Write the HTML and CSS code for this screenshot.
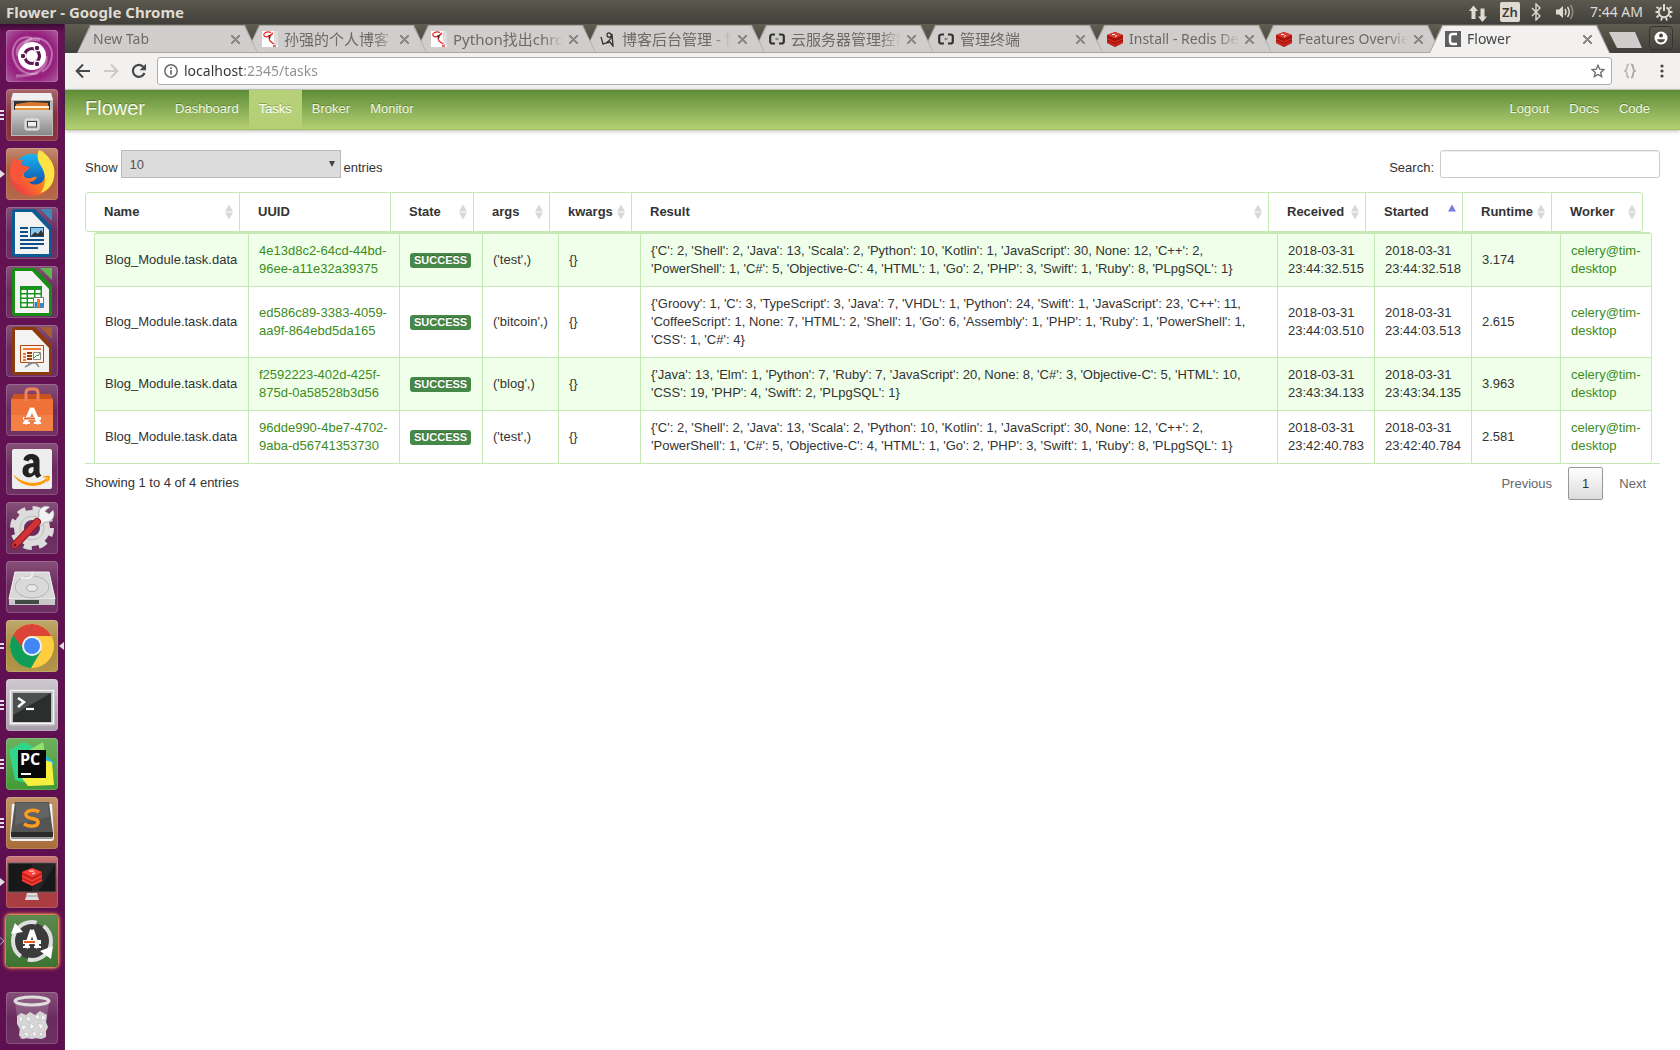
FILE: index.html
```html
<!DOCTYPE html>
<html lang="en">
<head>
<meta charset="utf-8">
<title>Flower</title>
<link rel="stylesheet" href="styles.css">
</head>
<body>
<header class="panel">
  <h1 class="panel-title">Flower - Google Chrome</h1>
  <div class="indicators">
    <svg width="20" height="20" viewBox="0 0 20 20" fill="#dfdbd2"><path d="M5.500 3.500L10 9H7.500v8h-4V9H1zM14.500 20L10 14.500h2.500v-8h4v8H19z"/></svg>
    <span class="ime">Zh</span>
    <svg width="12" height="18" viewBox="0 0 12 18" fill="none" stroke="#dfdbd2" stroke-width="1.400"><path d="M2 5l8 8-4 4V1l4 4-8 8"/></svg>
    <svg width="20" height="18" viewBox="0 0 20 18"><path d="M0 6.500h3L7 3v12l-4-3.500H0z" fill="#dfdbd2"/><g fill="none" stroke="#dfdbd2" stroke-width="1.500"><path d="M9 6q2 3 0 6"/><path d="M11.500 4q3.500 5 0 10"/><path d="M14.500 2q4.500 7 0 14" opacity=".45"/></g></svg>
    <time class="clock">7:44 AM</time>
    <svg width="18" height="18" viewBox="0 0 18 18" fill="none" stroke="#dfdbd2"><path d="M6.500 4.300a5.300 5.300 0 1 0 5 0M9 1v7" stroke-width="2"/><path d="M3.600 5.500L1.500 4M3 9H.5M3.600 12.500l-2 2M7 14.800L6 17.500M11 14.800l1 2.700M14.400 12.500l2 2M15 9h2.500M14.400 5.500l2-1.500" stroke-width="1.800"/></svg>
  </div>
</header>
<div class="desktop">
<nav class="launcher" aria-label="Launcher">
  <button class="tile ubuntu" aria-label="Search"><svg viewBox="0 0 52 52"><g fill="none" stroke="#fff"><path d="M26 8C10 4 2 20 10 34c4 8 14 12 22 9" opacity=".35" stroke-width="2"/><path d="M18 14C28 2 46 10 46 24c0 8-3 14-10 18" opacity=".35" stroke-width="2"/><path d="M40 26c2 14-12 20-30 20M12 26C8 14 22 8 34 10" opacity=".3" stroke-width="3"/></g><circle cx="26" cy="26" r="14" fill="#fff"/><circle cx="26" cy="26" r="7.500" fill="none" stroke="#5e1551" stroke-width="3.200"/><g stroke="#fff" stroke-width="1.200" fill="#5e1551"><circle cx="17" cy="26" r="2.800"/><circle cx="31" cy="18" r="2.800"/><circle cx="31" cy="34" r="2.800"/></g></svg></button>
  <button class="tile files" aria-label="Files"><svg viewBox="0 0 52 52"><defs><linearGradient id="cab" x2="0" y2="1"><stop stop-color="#d0d0d0"/><stop offset="1" stop-color="#888"/></linearGradient></defs><path d="M7 4h38l2 7v36H5V11z" fill="#b9b9b9"/><path d="M7 4h38l2 7H5z" fill="#efefef"/><path d="M8 12h36v10H8z" fill="#333"/><path d="M10 15l14-2 18 1v8H10z" fill="#d9792e"/><path d="M9 17h34v2H9z" fill="#fff1dc"/><path d="M9 19h34v3H9z" fill="#e9953e"/><path d="M6 21h40v25H6z" fill="url(#cab)"/><rect x="19" y="30" width="14" height="11" rx="2" fill="#c9c9c9" stroke="#eee"/><rect x="21.500" y="32.500" width="9" height="5.500" fill="#eee" stroke="#444"/></svg></button>
  <button class="tile firefox" aria-label="Firefox"><svg viewBox="0 0 52 52"><defs><linearGradient id="fx" x1="1" y1="0" x2="0" y2="1"><stop stop-color="#ffe14a"/><stop offset=".45" stop-color="#ff8a1d"/><stop offset="1" stop-color="#e8254f"/></linearGradient><linearGradient id="globe" x2="0" y2="1"><stop stop-color="#19b5f1"/><stop offset="1" stop-color="#123a9c"/></linearGradient></defs><circle cx="26" cy="25" r="19" fill="url(#globe)"/><path d="M4 26c0-7 2-10 4-13l8-1c-2 2-2 4-1 6l8 1c0 3-4 4-5 6-1 3 1 5 4 5 3 1 5-2 9-1-2 4-5 5-8 5 4 4 11 3 14-1 4-6 2-14-2-20-2-4-2-8 0-11 6 5 13 12 13 24 0 12-10 22-22 22S4 39 4 26z" fill="url(#fx)"/><path d="M33 2c8 5 15 11 15.500 22 0 12-6 18-14 21 6-8 6-19 0-28-3-5-4-10-1.500-15z" fill="#ffe244"/><path d="M4 24c0-6 2-9 4-14l6 3 4-2c-2 2-3 4-2 6l7 2c0 3-4 4-5 6-5 1-5 8 1 12-9 0-15-6-15-13z" fill="#f9553a"/></svg></button>
  <button class="tile" aria-label="Writer"><svg viewBox="0 0 52 52"><path d="M6 5q0-3 3-3h20l17 18v27q0 3-3 3H9q-3 0-3-3z" fill="#0d5b92"/><path d="M34 2h12v12z" fill="#3f87b5"/><path d="M9 5h17l17 18v24H9z" fill="#f3f3f3"/><path d="M14 20h8v2h-8zM14 24h8v2h-8zM14 28h8v2h-8zM14 32h24v2H14zM14 36h24v2H14zM14 40h18v2H14z" fill="#0d4f86"/><path d="M24 20h14v10H24z" fill="#0d4f86"/><path d="M25 21h12v8H25z" fill="#8bc5e9"/><path d="M25 29l4-4 3 2 3-4 2 3v3z" fill="#333"/></svg></button>
  <button class="tile" aria-label="Calc"><svg viewBox="0 0 52 52"><path d="M6 5q0-3 3-3h20l17 18v27q0 3-3 3H9q-3 0-3-3z" fill="#1b8c13"/><path d="M34 2h12v12z" fill="#5cb84f"/><path d="M9 5h17l17 18v24H9z" fill="#f3f3f3"/><path d="M14 20h22v22H14z" fill="#18931d"/><g fill="#fff"><path d="M15.500 24h5v3h-5zM22 24h6v3h-6zM29.500 24h5v3h-5zM15.500 28.500h5v3h-5zM22 28.500h6v3h-6zM29.500 28.500h5v3h-5zM15.500 33h5v3h-5zM22 33h6v3h-6zM15.500 37.500h5v3h-5zM22 37.500h6v3h-6z"/></g><path d="M27.500 31.500h10v10h-10z" fill="#fff" stroke="#777"/><path d="M28.500 36h2.500v5h-2.500z" fill="#3584c6"/><path d="M31 33h3v8h-3z" fill="#f07d1c"/><path d="M34 37h3v4h-3z" fill="#3584c6"/></svg></button>
  <button class="tile" aria-label="Impress"><svg viewBox="0 0 52 52"><path d="M6 5q0-3 3-3h20l17 18v27q0 3-3 3H9q-3 0-3-3z" fill="#8c3b0c"/><path d="M34 2h12v12z" fill="#a85d35"/><path d="M9 5h17l17 18v24H9z" fill="#f3f3f3"/><path d="M14.500 20.500h23v17h-23z" fill="#fff3ea" stroke="#b8450f"/><path d="M17 23h18v2H17zM17 28h3v2h-3zM17 31h3v2h-3zM17 34h3v2h-3z" fill="#ee7a3d"/><path d="M21 27h5v2h-5zM21 30h5v2h-5zM21 33h5v2h-5z" fill="#96390e"/><path d="M27.500 27.500h7v7h-7z" fill="#fff" stroke="#888"/><path d="M28 33l3-3 1 1 2-3" fill="none" stroke="#3aa53a"/><path d="M22 38h8l3 4M26 38l-7 4" fill="none" stroke="#888" stroke-width="1.500"/></svg></button>
  <button class="tile" aria-label="Ubuntu Software"><svg viewBox="0 0 52 52"><path d="M8 10h36l3 6v31H5V16z" fill="#ef7338"/><path d="M8 10h36l3 5H5z" fill="#c9531f"/><path d="M5 31h42v16H5z" fill="#f58a4e" opacity=".6"/><path d="M20 17V9q0-4 4-4h4q4 0 4 4v8" fill="none" stroke="#f0835a" stroke-width="3"/><path d="M26 24l-7 16M26 24l7 16" fill="none" stroke="#fff" stroke-width="4"/><path d="M17 33h18v3H17zM17 38h7v2h-7zM28 38h7v2h-7z" fill="#fff"/><path d="M18 33.500h11v2H18z" fill="#e8672c"/></svg></button>
  <button class="tile" aria-label="Amazon"><svg viewBox="0 0 52 52"><rect x="6" y="6" width="40" height="40" rx="2" fill="#eee"/><path d="M17.500 17c1-8 16-8 16 1v11q0 2 2 3.500l-4 2.500q-2-1-3-3.500c-4 5-12 3-12-3.500 0-7 6-7.500 11-8 0-5-4-4.500-5-1.500zM27.500 24c-3 0-5 1-5 4 0 4 5 3 5-1z" fill="#222" fill-rule="evenodd"/><path d="M8 32c10 10 25 10 33 3l1 2C33 46 16 45 8 33z" fill="#f90"/><path d="M36 34q5-2 8-1 0 4-3 7l1-5z" fill="#f90"/></svg></button>
  <button class="tile" aria-label="System Settings"><svg viewBox="0 0 52 52"><circle cx="26" cy="26" r="19" fill="none" stroke="#dcdcdc" stroke-width="6" stroke-dasharray="8 6.920"/><circle cx="26" cy="26" r="13" fill="none" stroke="#dcdcdc" stroke-width="10"/><circle cx="26" cy="26" r="12" fill="none" stroke="#bdbdbd"/><path d="M44 5c-6-3-13 2-11 9l-4 5 5 5 5-4c7 1 11-6 8-12l-4 4-4-3z" fill="#f2f2f2" stroke="#999" stroke-width=".8"/><path d="M31 20L9 43" stroke="#891d22" stroke-width="8" stroke-linecap="round"/><path d="M31 20L9 43" stroke="#d03238" stroke-width="6" stroke-linecap="round"/><circle cx="9" cy="43" r="1.500" fill="#701318"/></svg></button>
  <button class="tile" aria-label="Disk"><svg viewBox="0 0 52 52"><path d="M9 11h34l6 27H3z" fill="#d9d9d9" stroke="#f4f4f4"/><path d="M3 38h46v6H3z" fill="#c9c9c9"/><path d="M9 39h24v4H9z" fill="#434b48"/><ellipse cx="26" cy="26" rx="17" ry="11" fill="none" stroke="#b5b5b5"/><ellipse cx="26" cy="27" rx="5.500" ry="3.500" fill="#e8e8e8" stroke="#aaa"/><path d="M15 17q14 1 11-6" fill="none" stroke="#eee" stroke-width="2"/></svg></button>
  <button class="tile chrome" aria-label="Google Chrome"><svg viewBox="0 0 52 52"><circle cx="26" cy="26" r="22" fill="#ffcd40"/><path d="M26 26L7 15A22 22 0 0 0 25 48l10-17z" fill="#0f9d58"/><path d="M6.900 15A22 22 0 0 1 45.500 16H26a10 10 0 0 0-9.500 12z" fill="#db4437"/><circle cx="26" cy="26" r="10" fill="#f1f1f1"/><circle cx="26" cy="26" r="8" fill="#4285f4"/></svg></button>
  <button class="tile terminal" aria-label="Terminal"><svg viewBox="0 0 52 52"><rect x="3" y="10" width="46" height="37" rx="2" fill="#bcbcbc"/><rect x="4.500" y="11.500" width="43" height="33" fill="none" stroke="#f5f5f5" stroke-width="1.500"/><rect x="7" y="14" width="38" height="29" fill="#2c2e2e"/><path d="M7 14h38L7 36z" fill="#4d5050"/><path d="M12 19l6 4-6 5" fill="none" stroke="#fff" stroke-width="2.500"/><path d="M20 30h8" stroke="#fff" stroke-width="2.200"/></svg></button>
  <button class="tile pycharm" aria-label="PyCharm"><svg viewBox="0 0 52 52"><path d="M3 12L18 4l15 8 4-8 2 14-14 28L9 42z" fill="#31d58a"/><path d="M37 4L20 14v24l20-18z" fill="#8fe36b"/><path d="M34 14l14 10-6 10z" fill="#1dbbe6"/><path d="M38 22l8 2 2 23-26 1-6-8z" fill="#f6ef3e"/><rect x="12" y="12" width="28" height="28" fill="#080808"/><path d="M15 35h10v2H15z" fill="#fff"/><text x="14" y="27" class="pc">PC</text></svg></button>
  <button class="tile sublime" aria-label="Sublime Text"><svg viewBox="0 0 52 52"><path d="M6 7L4 41q0 3 3 3h38q3 0 3-3L46 7z" fill="#f3f3f3"/><path d="M6 38l-1 4h42l-1-4z" fill="#999"/><path d="M9 5h34l4 31v3H5v-3z" fill="#545454"/><path d="M5 35h42v5H5z" fill="#2b2b2b"/><path d="M10 6h32l1 14-34 8z" fill="#6e6e6e" opacity=".6"/><path d="M33 15c-4-3-14-2-13 3s13 2 12 8c-1 4-9 4-14 1" fill="none" stroke="#ff9b1f" stroke-width="3.500"/></svg></button>
  <button class="tile redis" aria-label="Redis Desktop Manager"><svg viewBox="0 0 52 52"><rect x="2" y="7" width="48" height="29" fill="#181818" stroke="#666" stroke-width=".8"/><path d="M26 7h24L32 36H26z" fill="#333" opacity=".5"/><path d="M16 16l10-4 10 4v9l-10 5-10-5z" fill="#c5251d"/><path d="M16 16l10-4 10 4-10 5z" fill="#ff3f38"/><path d="M16 20l10 5 10-5M16 24l10 5 10-5" fill="none" stroke="#ff3f38" stroke-width="1.500"/><path d="M23 15h5M26 18l3-1" stroke="#fff"/><path d="M21 37h10l2 7H19z" fill="#ddd"/><path d="M20 40h12" stroke="#999"/></svg></button>
  <button class="tile updater" aria-label="Software Updater"><svg viewBox="0 0 52 52"><circle cx="26" cy="26" r="18" fill="#3b3b3b"/><circle cx="26" cy="26" r="19" fill="none" stroke="#dedede" stroke-width="4" stroke-dasharray="52 7.700" stroke-dashoffset="18"/><path d="M5 19l4-11 8 9zM47 31l-2 13-11-8z" fill="#fff"/><path d="M26 15l-6 18M26 15l6 18" fill="none" stroke="#fff" stroke-width="4"/><path d="M17 25h18v4H17zM17 31h7v2h-7zM28 31h7v2h-7z" fill="#fff"/><path d="M18 26h11v2H18z" fill="#e35f1f"/></svg></button>
  <button class="tile trash" aria-label="Trash"><svg viewBox="0 0 52 52"><path d="M9 10l5 37h24l5-37z" fill="#fff" opacity=".18"/><ellipse cx="26" cy="9" rx="17" ry="4" fill="#8c5a83" stroke="#dedede" stroke-width="3"/><path d="M11 24l4-3 5 2 4-3 5 3 5-4 7 4-1 7 2 5-2 4v6l-5 2-5-1-4 1-5-1-5 1-3-4 1-6-3-5z" fill="#d6d6d6"/><path d="M13 23l4 4-3 4zM20 24l5 2-3 5zM28 25l5-3 1 6zM36 22l4 4-5 3zM15 33l6 1-4 5zM24 31l5 3-5 4zM32 31l6 2-4 5zM17 41l5-1 1 6zM26 39l5 2-3 5zM33 40l4 1-2 5z" fill="#f6f6f6" stroke="#b3b3b3" stroke-width=".5"/></svg></button>
</nav>

<div class="browser">
  <div class="tabstrip">
    <div class="tab"><button class="tab-title">New Tab</button><button class="close" aria-label="Close tab"></button></div>
    <div class="tab"><svg class="favicon" viewBox="0 0 16 16"><path fill="#fff" d="M0 0h16v16H0z"/><path fill="#ddd" d="M12 0h4v14h-4z"/><path d="M9 1.500C5 0 1 2 2 4.500s5 1.500 9-2.500c-3 3-5 5-3 8l4 3" fill="none" stroke="#e22" stroke-width="1.200"/><path d="M7.500 4v3.500" stroke="#333" stroke-width="1.600"/><path fill="#e66" d="M11 14h3v2h-3z"/></svg><button class="tab-title" lang="zh">孙强的个人博客</button><button class="close" aria-label="Close tab"></button></div>
    <div class="tab"><svg class="favicon" viewBox="0 0 16 16"><path fill="#fff" d="M0 0h16v16H0z"/><path fill="#ddd" d="M12 0h4v14h-4z"/><path d="M9 1.500C5 0 1 2 2 4.500s5 1.500 9-2.500c-3 3-5 5-3 8l4 3" fill="none" stroke="#e22" stroke-width="1.200"/><path d="M7.500 4v3.500" stroke="#333" stroke-width="1.600"/><path fill="#e66" d="M11 14h3v2h-3z"/></svg><button class="tab-title" lang="zh">Python找出chrome</button><button class="close" aria-label="Close tab"></button></div>
    <div class="tab"><svg class="favicon" viewBox="0 0 16 16" fill="none" stroke="#333" stroke-width="1.300"><path d="M1 6l2 7q5-1 8-6c2-5-4-7-4-3s5 2 5-1l1 12-3-4-4 1"/></svg><button class="tab-title" lang="zh">博客后台管理 - 博客</button><button class="close" aria-label="Close tab"></button></div>
    <div class="tab"><svg class="favicon" viewBox="0 0 16 16" fill="none" stroke="#333" stroke-width="2.200"><path d="M6 3.500H3.500Q1.200 3.500 1.200 5.500v5q0 2 2.300 2H6M10 3.500h2.500q2.300 0 2.300 2v5q0 2-2.300 2H10"/><path d="M6.500 8h3" stroke="#888"/></svg><button class="tab-title" lang="zh">云服务器管理控制台</button><button class="close" aria-label="Close tab"></button></div>
    <div class="tab"><svg class="favicon" viewBox="0 0 16 16" fill="none" stroke="#333" stroke-width="2.200"><path d="M6 3.500H3.500Q1.200 3.500 1.200 5.500v5q0 2 2.300 2H6M10 3.500h2.500q2.300 0 2.300 2v5q0 2-2.300 2H10"/><path d="M6.500 8h3" stroke="#888"/></svg><button class="tab-title" lang="zh">管理终端</button><button class="close" aria-label="Close tab"></button></div>
    <div class="tab"><svg class="favicon" viewBox="0 0 16 16"><path d="M0 4l8-3 8 3v8l-8 4-8-4z" fill="#a41209"/><path d="M0 4l8-3 8 3-8 3.500z" fill="#dd3a2f"/><path d="M0 7.500L8 11l8-3.500M0 10.500L8 14l8-3.500" fill="none" stroke="#d62e24" stroke-width="1.300"/><path d="M5 3.500h3M8 5.500l2-1" stroke="#fff"/></svg><button class="tab-title">Install - Redis Desktop</button><button class="close" aria-label="Close tab"></button></div>
    <div class="tab"><svg class="favicon" viewBox="0 0 16 16"><path d="M0 4l8-3 8 3v8l-8 4-8-4z" fill="#a41209"/><path d="M0 4l8-3 8 3-8 3.500z" fill="#dd3a2f"/><path d="M0 7.500L8 11l8-3.500M0 10.500L8 14l8-3.500" fill="none" stroke="#d62e24" stroke-width="1.300"/><path d="M5 3.500h3M8 5.500l2-1" stroke="#fff"/></svg><button class="tab-title">Features Overview</button><button class="close" aria-label="Close tab"></button></div>
    <div class="tab active"><svg class="favicon" viewBox="0 0 16 16"><path fill="#5f5f61" d="M0 0h16v16H0z"/><path d="M12 3H7.500Q5 3 5 6v4q0 3 2.500 3H12" fill="none" stroke="#fff" stroke-width="2.400"/></svg><button class="tab-title">Flower</button><button class="close" aria-label="Close tab"></button></div>
    <button class="new-tab" aria-label="New tab"></button>
    <button class="profile" aria-label="Profile"><svg width="14" height="14" viewBox="0 0 14 14"><circle cx="7" cy="7" r="6.500" fill="#fff"/><circle cx="7" cy="4.500" r="2" fill="#4a4944"/><path d="M3 8.200h8q-1 3.300-4 3.300T3 8.200z" fill="#4a4944"/></svg></button>
  </div>
  <div class="toolbar">
    <button class="tool" aria-label="Back"><svg width="16" height="16" viewBox="0 0 16 16" fill="none" stroke="#484848" stroke-width="2"><path d="M8 1.500L1.700 8 8 14.500M2 8h13"/></svg></button>
    <button class="tool" aria-label="Forward"><svg width="16" height="16" viewBox="0 0 16 16" fill="none" stroke="#cbcac9" stroke-width="2"><path d="M8 1.500L14.300 8 8 14.500M14 8H1"/></svg></button>
    <button class="tool" aria-label="Reload"><svg width="16" height="16" viewBox="0 0 16 16"><path d="M13.500 10A6 6 0 1 1 12.500 4" fill="none" stroke="#484848" stroke-width="2.200"/><path d="M15 .8v6.400H8.600z" fill="#484848"/></svg></button>
    <div class="omnibox">
      <svg width="14" height="14" viewBox="0 0 14 14"><circle cx="7" cy="7" r="6.200" fill="none" stroke="#6a6a6a" stroke-width="1.500"/><path d="M6.200 6h1.700v4.500H6.200zM6.200 3.300h1.700V5H6.200z" fill="#6a6a6a"/></svg>
      <input class="url" type="text" aria-label="Address" value="localhost:2345/tasks">
      <button class="star" aria-label="Bookmark"><svg width="14" height="14" viewBox="0 0 14 14"><path d="M7 1.300l1.700 3.900 4.200.4-3.200 2.800 1 4.200L7 10.400l-3.700 2.200 1-4.200L1.100 5.600l4.200-.4z" fill="none" stroke="#6a6a6a" stroke-width="1.300"/></svg></button>
    </div>
    <button class="tool" aria-label="JSON viewer"><svg width="12" height="16" viewBox="0 0 12 16" fill="none" stroke-width="1.800"><path d="M5 1.500Q3 1.500 3 4t-2 4q2 .5 2 3.500T5 14.500" stroke="#bbb"/><path d="M7 1.500q2 0 2 2.500t2 4q-2 .5-2 3.500t-2 3" stroke="#aaa"/></svg></button>
    <button class="tool menu" aria-label="Menu"><svg width="4" height="14" viewBox="0 0 4 14" fill="#484848"><circle cx="2" cy="2" r="1.600"/><circle cx="2" cy="7" r="1.600"/><circle cx="2" cy="12" r="1.600"/></svg></button>
  </div>

  <div class="page">
    <nav class="navbar">
      <a class="brand" href="#">Flower</a>
      <a class="nav-link" href="#">Dashboard</a>
      <a class="nav-link current" href="#">Tasks</a>
      <a class="nav-link" href="#">Broker</a>
      <a class="nav-link" href="#">Monitor</a>
      <a class="nav-link first-right" href="#">Logout</a>
      <a class="nav-link" href="#">Docs</a>
      <a class="nav-link" href="#">Code</a>
    </nav>
    <main class="content">
      <div class="controls">
        <div class="field">
          <label for="length">Show</label>
          <span class="select-box"><select id="length"><option>10</option><option>25</option><option>50</option></select><svg class="caret" width="6" height="6" viewBox="0 0 6 6"><path d="M0 0h6L3 6z" fill="#444"/></svg></span>
          <span>entries</span>
        </div>
        <div class="field search">
          <label for="search">Search:</label>
          <input id="search" type="search">
        </div>
      </div>
      <div class="grid">
        <table class="head">
          <colgroup><col class="c-name"><col class="c-uuid"><col class="c-state"><col class="c-args"><col class="c-kwargs"><col><col class="c-time"><col class="c-time"><col class="c-runtime"><col class="c-worker"></colgroup>
          <thead><tr>
            <th><span class="sort both">Name</span></th>
            <th><span class="sort">UUID</span></th>
            <th><span class="sort both">State</span></th>
            <th><span class="sort both">args</span></th>
            <th><span class="sort both">kwargs</span></th>
            <th><span class="sort both">Result</span></th>
            <th><span class="sort both">Received</span></th>
            <th><span class="sort asc">Started</span></th>
            <th><span class="sort both">Runtime</span></th>
            <th><span class="sort both">Worker</span></th>
          </tr></thead>
        </table>
        <div class="scroll-body">
        <table class="rows">
          <colgroup><col class="c-name"><col class="c-uuid"><col class="c-state"><col class="c-args"><col class="c-kwargs"><col><col class="c-time"><col class="c-time"><col class="c-runtime"><col class="c-worker"></colgroup>
          <tbody>
            <tr><td>Blog_Module.task.data</td><td><a href="#">4e13d8c2-64cd-44bd-96ee-a11e32a39375</a></td><td><span class="label">SUCCESS</span></td><td>('test',)</td><td>{}</td><td>{'C': 2, 'Shell': 2, 'Java': 13, 'Scala': 2, 'Python': 10, 'Kotlin': 1, 'JavaScript': 30, None: 12, 'C++': 2, 'PowerShell': 1, 'C#': 5, 'Objective-C': 4, 'HTML': 1, 'Go': 2, 'PHP': 3, 'Swift': 1, 'Ruby': 8, 'PLpgSQL': 1}</td><td>2018-03-31 23:44:32.515</td><td>2018-03-31 23:44:32.518</td><td>3.174</td><td><a href="#">celery@tim-desktop</a></td></tr>
            <tr><td>Blog_Module.task.data</td><td><a href="#">ed586c89-3383-4059-aa9f-864ebd5da165</a></td><td><span class="label">SUCCESS</span></td><td>('bitcoin',)</td><td>{}</td><td>{'Groovy': 1, 'C': 3, 'TypeScript': 3, 'Java': 7, 'VHDL': 1, 'Python': 24, 'Swift': 1, 'JavaScript': 23, 'C++': 11, 'CoffeeScript': 1, None: 7, 'HTML': 2, 'Shell': 1, 'Go': 6, 'Assembly': 1, 'PHP': 1, 'Ruby': 1, 'PowerShell': 1, 'CSS': 1, 'C#': 4}</td><td>2018-03-31 23:44:03.510</td><td>2018-03-31 23:44:03.513</td><td>2.615</td><td><a href="#">celery@tim-desktop</a></td></tr>
            <tr><td>Blog_Module.task.data</td><td><a href="#">f2592223-402d-425f-875d-0a58528b3d56</a></td><td><span class="label">SUCCESS</span></td><td>('blog',)</td><td>{}</td><td>{'Java': 13, 'Elm': 1, 'Python': 7, 'Ruby': 7, 'JavaScript': 20, None: 8, 'C#': 3, 'Objective-C': 5, 'HTML': 10, 'CSS': 19, 'PHP': 4, 'Swift': 2, 'PLpgSQL': 1}</td><td>2018-03-31 23:43:34.133</td><td>2018-03-31 23:43:34.135</td><td>3.963</td><td><a href="#">celery@tim-desktop</a></td></tr>
            <tr><td>Blog_Module.task.data</td><td><a href="#">96dde990-4be7-4702-9aba-d56741353730</a></td><td><span class="label">SUCCESS</span></td><td>('test',)</td><td>{}</td><td>{'C': 2, 'Shell': 2, 'Java': 13, 'Scala': 2, 'Python': 10, 'Kotlin': 1, 'JavaScript': 30, None: 12, 'C++': 2, 'PowerShell': 1, 'C#': 5, 'Objective-C': 4, 'HTML': 1, 'Go': 2, 'PHP': 3, 'Swift': 1, 'Ruby': 8, 'PLpgSQL': 1}</td><td>2018-03-31 23:42:40.783</td><td>2018-03-31 23:42:40.784</td><td>2.581</td><td><a href="#">celery@tim-desktop</a></td></tr>
          </tbody>
        </table>
        </div>
      </div>
      <div class="table-footer">
        <p class="info">Showing 1 to 4 of 4 entries</p>
        <div class="pager"><button>Previous</button><button class="page-current">1</button><button>Next</button></div>
      </div>
    </main>
  </div>
</div>
</div>
<script src="launcher.js"></script>
</body>
</html>
```
FILE: launcher.js
```js
// Marks each launcher tile with its count of open windows.
var running = {
  "Files": "three", "Firefox": "arrow", "Google Chrome": "two focused", "Terminal": "three",
  "PyCharm": "three", "Sublime Text": "three", "Redis Desktop Manager": "arrow", "Software Updater": "outline"
};
var shapes = {
  three: '<path d="M0 1h4M0 5h4M0 9h4" stroke="#e4dce2" stroke-width="2"/>',
  two: '<path d="M0 3h4M0 7h4" stroke="#e4dce2" stroke-width="2"/>',
  arrow: '<path d="M0 1l5 4-5 4z" fill="#e4dce2"/>',
  outline: '<path d="M0 1.500L4 5 0 8.500" fill="none" stroke="#8fb7dc"/>',
  focused: '<path d="M5 1L0 5l5 4z" fill="#e4dce2"/>'
};
Object.keys(running).forEach(function (name) {
  var tile = document.querySelector('.tile[aria-label="' + name + '"]');
  running[name].split(" ").forEach(function (kind) {
    tile.insertAdjacentHTML("beforeend", '<svg class="pip pip-' + kind + '" viewBox="0 0 5 10">' + shapes[kind] + "</svg>");
  });
});
```
FILE: styles.css
```css
* { box-sizing: border-box; }

body {
  margin: 0;
  min-height: 100vh;
  display: flex;
  flex-direction: column;
  background: #fff;
  color: #333;
  font: 13px/18px "Liberation Sans", Arial, sans-serif;
}

button {
  border: 0;
  padding: 0;
  background: none;
  color: inherit;
  font: inherit;
}

a { text-decoration: none; }
svg { flex: none; display: block; }

/* Top panel */
.panel {
  display: flex;
  justify-content: space-between;
  align-items: center;
  height: 24px;
  padding: 0 7px 0 6px;
  background: linear-gradient(#5c594e, #403f3a);
  color: #dfdbd2;
  font-family: "Noto Sans", "Open Sans", sans-serif;
}
.panel-title { margin: 0; font-size: 15px; line-height: 20px; font-weight: 700; }
.indicators { display: flex; align-items: center; }
.indicators svg { margin-right: 14px; }
.indicators svg:first-child { margin-right: 12px; }
.indicators svg:last-child { margin-right: 0; }
.ime {
  width: 20px;
  margin-right: 10px;
  border-radius: 2px;
  background: #dfdbd2;
  color: #3c3b37;
  font-size: 13px;
  line-height: 20px;
  font-weight: 600;
  text-align: center;
}
.clock { margin-right: 12px; font-size: 14px; line-height: 20px; white-space: nowrap; }

.desktop { flex: 1; display: flex; }

/* Launcher */
.launcher {
  flex: none;
  display: flex;
  flex-direction: column;
  gap: 7px;
  width: 65px;
  padding: 6px 7px 6px 6px;
  border-right: 1px solid #54204a;
  background: linear-gradient(#3c0b33, #641254 8px, #5e0f4f);
}
.tile {
  position: relative;
  width: 52px;
  height: 52px;
  border-radius: 4px;
  background: linear-gradient(#865079, #6a2a5d 50%, #6f3163);
  box-shadow: inset 0 0 0 1px rgba(255, 255, 255, .16);
}
.tile svg { width: 52px; height: 52px; }
.tile .pip { position: absolute; left: -6px; top: 21px; width: 5px; height: 10px; }
.tile .pip-focused { left: 53px; }
.ubuntu { background: radial-gradient(#b8479f, #951f7d 60%, #b060a0); }
.files { background: linear-gradient(#a9686d, #85303b 50%, #8c3640); }
.firefox { background: linear-gradient(#c18a70, #ae5d3d 40%, #b5694a); }
.chrome { background: linear-gradient(#c0aa70, #a98a3d 50%, #b3964a); }
.terminal { background: linear-gradient(#cfc7cf, #a99cab); }
.pycharm { background: linear-gradient(#6fb060, #429a37); }
.sublime { background: linear-gradient(#c09568, #a76d38); }
.redis { background: linear-gradient(#c97878, #aa3d42 50%); }
.updater { background: linear-gradient(#5c8a50, #3d7331); box-shadow: 0 0 2px 1px #f09060, 0 0 4px 1px #e07a4c; }
.trash { margin-top: auto; }
.pc { font: 700 16px "Open Sans", sans-serif; fill: #fff; }

/* Browser chrome */
.browser { flex: 1; min-width: 0; }
.tabstrip {
  display: flex;
  height: 29px;
  padding: 1px 7px 0 12px;
  background: linear-gradient(#5f5d51, #403f3a);
  font-family: "Noto Sans", "Noto Sans CJK SC", sans-serif;
  isolation: isolate;
}
.tab {
  position: relative;
  flex: 0 1 181px;
  min-width: 0;
  display: flex;
  align-items: center;
  gap: 6px;
  margin-right: -12px;
  padding: 0 18px 0 16px;
  color: #6d6b69;
}
.tab::before, .tab::after {
  content: "";
  position: absolute;
  inset: 0;
  z-index: -1;
  background: #a9a7a4;
  clip-path: polygon(0 100%, 13px 0, calc(100% - 13px) 0, 100% 100%);
}
.tab::after {
  background: #d0cecc;
  clip-path: polygon(1px calc(100% - 1px), 14px 1px, calc(100% - 14px) 1px, calc(100% - 1px) calc(100% - 1px));
}
.tab { z-index: 1; }
.tab:nth-child(1) { z-index: 9; }
.tab:nth-child(2) { z-index: 8; }
.tab:nth-child(3) { z-index: 7; }
.tab:nth-child(4) { z-index: 6; }
.tab:nth-child(5) { z-index: 5; }
.tab:nth-child(6) { z-index: 4; }
.tab:nth-child(7) { z-index: 3; }
.tab:nth-child(8) { z-index: 2; }
.tab.active { z-index: 10; color: #444; }
.tab.active::after {
  background: #f2f1f0;
  clip-path: polygon(1px 100%, 14px 1px, calc(100% - 14px) 1px, calc(100% - 1px) 100%);
}
.favicon { width: 16px; height: 16px; }
.tab-title {
  flex: 1;
  min-width: 0;
  overflow: hidden;
  font-size: 14px;
  line-height: 22px;
  text-align: left;
  white-space: nowrap;
  -webkit-mask-image: linear-gradient(90deg, #000 calc(100% - 20px), transparent);
  mask-image: linear-gradient(90deg, #000 calc(100% - 20px), transparent);
}
.tab-title:lang(zh) { font-size: 15px; }
.close {
  flex: none;
  width: 9px;
  height: 9px;
  background:
    linear-gradient(45deg, transparent 44%, #8b8987 44% 56%, transparent 56%),
    linear-gradient(-45deg, transparent 44%, #8b8987 44% 56%, transparent 56%);
}
.new-tab {
  flex: none;
  width: 33px;
  height: 16px;
  margin: 7px auto 0 11px;
  background: #cfcdcb;
  clip-path: polygon(0 0, 26px 0, 100% 100%, 8px 100%);
}
.profile {
  flex: none;
  width: 24px;
  height: 24px;
  display: grid;
  place-items: center;
  margin-top: 1px;
  border: 1px solid #34332f;
  border-radius: 4px;
}
.toolbar {
  display: flex;
  align-items: center;
  gap: 12px;
  height: 37px;
  padding: 0 10px;
  border-bottom: 1px solid #c9cdc6;
  background: #f2f1f0;
}
.tool { display: grid; place-items: center; min-width: 16px; height: 28px; }
.tool.menu { margin-left: 4px; }
.omnibox {
  flex: 1;
  display: flex;
  align-items: center;
  gap: 6px;
  height: 28px;
  margin: 0 -2px;
  padding: 0 6px;
  border: 1px solid #b0aeac;
  border-radius: 3px;
  background: #fff;
}
.url {
  flex: 1;
  min-width: 0;
  border: 0;
  padding: 0;
  outline: 0;
  background: linear-gradient(90deg, #333 59px, #8f8f8f 59px);
  -webkit-background-clip: text;
  background-clip: text;
  color: transparent;
  font: 14px/20px "Noto Sans", sans-serif;
}

/* Flower navigation */
.navbar {
  display: flex;
  height: 40px;
  padding: 0 20px;
  border-bottom: 1px solid #a3bf5e;
  background: linear-gradient(#5e8c37, #b4cf72);
  box-shadow: 0 1px 4px rgba(0, 0, 0, .3);
  text-shadow: 0 -1px 0 rgba(0, 0, 0, .25);
  line-height: 20px;
}
.brand { padding: 8px 20px 0 0; color: #f5faec; font-size: 20px; }
.nav-link { padding: 9px 10px; color: #f0f7e4; }
.nav-link.current { background: #b6d077; color: #fff; }
.first-right { margin-left: auto; }

/* Task list */
.content { padding: 20px; }
.controls { display: flex; justify-content: space-between; }
.field { display: flex; align-items: flex-end; gap: 3px; line-height: 20px; }
.field.search { gap: 6px; }
.select-box { position: relative; width: 220px; }
.select-box select {
  display: block;
  width: 100%;
  height: 28px;
  padding: 2px 8px 0;
  border: 1px solid #bbb;
  border-radius: 0;
  background: #dcdcdc;
  color: #555;
  font: inherit;
  appearance: none;
}
.caret { position: absolute; right: 6px; top: 11px; }
.field input {
  width: 220px;
  height: 28px;
  padding: 0 6px;
  border: 1px solid #ccc;
  border-radius: 3px;
  background: #fff;
  box-shadow: inset 0 1px 1px rgba(0, 0, 0, .075);
  font: inherit;
}
.grid { margin-top: 14px; }
table {
  table-layout: fixed;
  border: 1px solid #c5e9b4;
  border-left: 0;
  border-spacing: 0;
  border-radius: 4px;
}
.head { width: calc(100% - 17px); }
.scroll-body { padding: 0 8px 0 9px; border-bottom: 1px solid #c5e9b4; }
.rows { width: 100%; border-bottom: 0; }
.c-name { width: 154px; }
.c-uuid { width: 151px; }
.c-state { width: 83px; }
.c-args { width: 76px; }
.c-kwargs { width: 82px; }
.c-time { width: 97px; }
.c-runtime { width: 89px; }
.c-worker { width: 91px; }
th {
  padding: 10px 6px 10px 18px;
  border-left: 1px solid #c5e9b4;
  text-align: left;
}
th:first-child { border-radius: 4px 0 0 4px; }
.sort { display: flex; justify-content: space-between; align-items: center; }
.sort.both::after, .sort.asc::after {
  content: "";
  width: 8px;
  height: 15px;
  background: #d8d8d8;
  clip-path: polygon(50% 0, 100% 7px, 0 7px, 0 8px, 100% 8px, 50% 100%, 0 8px, 0 7px);
}
.sort.asc::after {
  background: #7b7bdc;
  clip-path: polygon(50% 0, 100% 7px, 0 7px);
}
td {
  padding: 8px 5px 8px 10px;
  border: 1px solid #c5e9b4;
  border-width: 1px 0 0 1px;
}
tr:nth-child(odd) td { background: #efffe9; }
td a { color: #3c8c22; }
.label {
  display: inline-block;
  padding: 0 4px;
  border-radius: 3px;
  background: #468847;
  color: #fff;
  font-size: 11px;
  line-height: 15px;
  font-weight: 700;
  text-shadow: 0 -1px 0 rgba(0, 0, 0, .25);
}
.table-footer { display: flex; justify-content: space-between; padding-top: 3px; }
.info { margin: 0; padding-top: 7px; }
.pager { display: flex; gap: 2px; color: #666; }
.pager button { padding: 8px 14px 7px; }
.pager .page-current {
  padding: 7px 13px 6px;
  border: 1px solid #979797;
  border-radius: 2px;
  background: linear-gradient(#fff, #dcdcdc);
  color: #333;
}
```
